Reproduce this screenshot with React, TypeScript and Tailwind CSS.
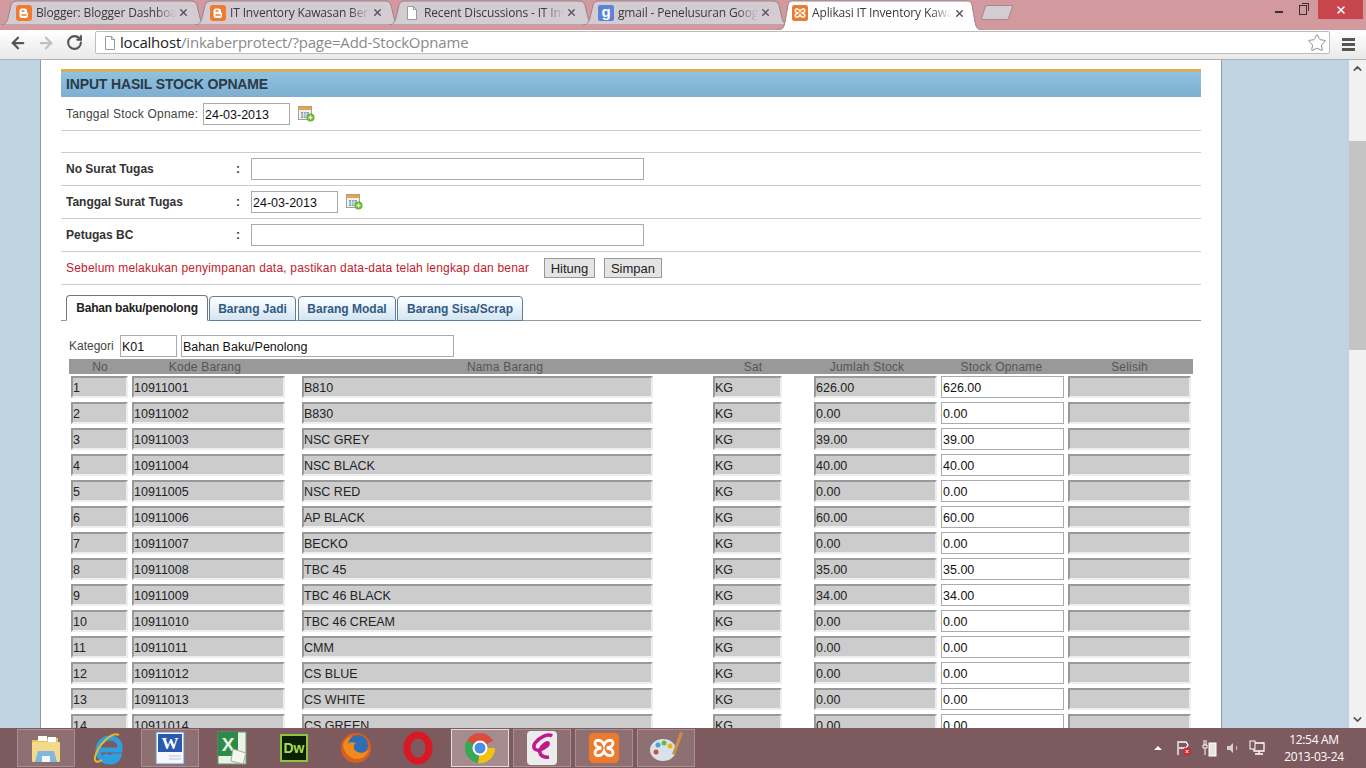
import React from "react";
import { ArrowLeft, ArrowRight, RotateCw, Star, X, ChevronUp, ChevronDown } from "lucide-react";

const items = [
  ["10911001", "B810", "626.00", "626.00"],
  ["10911002", "B830", "0.00", "0.00"],
  ["10911003", "NSC GREY", "39.00", "39.00"],
  ["10911004", "NSC BLACK", "40.00", "40.00"],
  ["10911005", "NSC RED", "0.00", "0.00"],
  ["10911006", "AP BLACK", "60.00", "60.00"],
  ["10911007", "BECKO", "0.00", "0.00"],
  ["10911008", "TBC 45", "35.00", "35.00"],
  ["10911009", "TBC 46 BLACK", "34.00", "34.00"],
  ["10911010", "TBC 46 CREAM", "0.00", "0.00"],
  ["10911011", "CMM", "0.00", "0.00"],
  ["10911012", "CS BLUE", "0.00", "0.00"],
  ["10911013", "CS WHITE", "0.00", "0.00"],
  ["10911014", "CS GREEN", "0.00", "0.00"],
];

const BloggerIcon = () => (
  <svg width="16" height="16" viewBox="0 0 16 16" className="shrink-0">
    <rect width="16" height="16" rx="3" fill="#f07a30" />
    <path d="M6 3.5h2.5A2.5 2.5 0 0 1 11 6v1a1 1 0 0 0 1 1v2.500A2.500 2.500 0 0 1 9.500 13h-3.500A2.500 2.500 0 0 1 3.500 10.500V6A2.500 2.500 0 0 1 6 3.500z" fill="#fff" />
    <path d="M6 6h2M6 10h4" stroke="#f07a30" strokeWidth="1.400" strokeLinecap="round" />
  </svg>
);

const PageIcon = () => (
  <svg width="16" height="16" viewBox="0 0 16 16" className="shrink-0">
    <path d="M3.500 1.500h6l3 3v10h-9z" fill="#fff" stroke="#9a9a9a" />
    <path d="M9.500 1.500v3h3" fill="none" stroke="#9a9a9a" />
  </svg>
);

const GoogleIcon = () => (
  <span className="flex h-4 w-4 shrink-0 items-center justify-center rounded-[2px] bg-[#5b84d8] pb-[3px] font-['Liberation_Sans',sans-serif] text-[15px] font-bold leading-none text-white">
    g
  </span>
);

const XamppIcon = ({ size = 16 }: { size?: number }) => (
  <svg width={size} height={size} viewBox="0 0 16 16" className="shrink-0">
    <rect width="16" height="16" rx="2.500" fill="#ee7a2d" />
    <path
      d="M8 6.200C7 3.500 3.400 3 3.200 5.400 3.100 7 5 7.700 6.500 8 5 8.300 3.100 9 3.200 10.600 3.400 13 7 12.500 8 9.800 9 12.500 12.600 13 12.800 10.600 12.900 9 11 8.300 9.500 8 11 7.700 12.900 7 12.800 5.400 12.600 3 9 3.500 8 6.200z"
      fill="none"
      stroke="#fff"
      strokeWidth="1.500"
    />
  </svg>
);

const CalendarIcon = () => (
  <svg width="17" height="16" viewBox="0 0 17 16" className="shrink-0">
    <rect x="0.500" y="0.500" width="13" height="13" fill="#f4f4ee" stroke="#a5a08c" />
    <rect x="1" y="1" width="12" height="3" fill="#e9a14b" />
    <rect x="3" y="6" width="8" height="6" fill="#7f9bb8" />
    <path d="M5.500 6v6M8 6v6M3 8h8M3 10h8" stroke="#e6edf2" strokeWidth="0.800" />
    <circle cx="12.500" cy="11.500" r="4" fill="#69b52c" />
    <path d="M10.500 11.500h4M12.500 9.500v4" stroke="#fff" strokeWidth="1.300" />
  </svg>
);

const ChromeTab = ({
  title,
  icon,
  active,
}: {
  title: string;
  icon: React.ReactNode;
  active?: boolean;
}) => (
  <div className={`relative -mr-[12px] flex w-[206px] items-center pl-[15px] ${active ? "h-[30px]" : "h-[25px]"}`}>
    <svg width="206" height={active ? 30 : 25} className="absolute left-0 top-0">
      <path
        d={
          active
            ? "M0 30C6 30 7 27 8 22L11 5C12 2 13 1 17 1H189C193 1 194 2 195 5L198 22C199 27 200 30 206 30"
            : "M0 25C4 25 6 22 7 18L10 5C11 2 13 1 16 1H190C193 1 195 2 196 5L199 18C200 22 202 25 206 25Z"
        }
        fill={active ? "#ffffff" : "#d3ccd3"}
        stroke="#9c8488"
      />
    </svg>
    <div className={`relative flex items-center ${active ? "-mt-[4px]" : ""}`}>
      {icon}
      <span className="ml-[4px] w-[140px] overflow-hidden whitespace-nowrap text-[12px] leading-[14px] tracking-[-0.15px] text-[#3a3a3a] [mask-image:linear-gradient(to_right,#000_85%,transparent)]">
        {title}
      </span>
      <X size={11} strokeWidth={3} className="ml-[2px] text-[#55505a]" />
    </div>
  </div>
);

const BrowserChrome = () => (
  <div className="shrink-0 font-['Open_Sans',sans-serif]">
    <div className="relative h-[30px] bg-[#d2999e] pl-[1px]">
      <div className="flex items-start">
        <ChromeTab title="Blogger: Blogger Dashboard" icon={<BloggerIcon />} />
        <ChromeTab title="IT Inventory Kawasan Berikat" icon={<BloggerIcon />} />
        <ChromeTab title="Recent Discussions - IT Inventory" icon={<PageIcon />} />
        <ChromeTab title="gmail - Penelusuran Google" icon={<GoogleIcon />} />
        <ChromeTab title="Aplikasi IT Inventory Kawasan" icon={<XamppIcon />} active />
        <div className="ml-[12px] mt-[5px] h-[15px] w-[28px] -skew-x-[18deg] rounded-[2px] border border-[#a08a90] bg-[#d3ccd3]" />
      </div>
      <div className="absolute right-[3px] top-0 flex items-start">
        <div className="mr-[16px] mt-[11px] h-[2px] w-[8px] bg-[#333]" />
        <div className="relative mr-[11px] mt-[5px] h-[10px] w-[8px] border border-[#333]">
          <div className="absolute -right-[3px] -top-[3px] h-[8px] w-[7px] border-r border-t border-[#333]" />
        </div>
        <div className="flex h-[19px] w-[45px] items-center justify-center bg-[#c8474f]">
          <X size={12} strokeWidth={3} className="text-white" />
        </div>
      </div>
    </div>
    <div className="flex h-[30px] items-start border-b border-[#b0b0b0] bg-gradient-to-b from-[#ffffff] to-[#e9e9e9] pl-[9px]">
      <ArrowLeft size={18} strokeWidth={3} className="mt-[4px] text-[#555]" />
      <ArrowRight size={18} strokeWidth={3} className="ml-[10px] mt-[4px] text-[#c0c0c0]" />
      <RotateCw size={17} strokeWidth={3} className="ml-[11px] mt-[4px] text-[#555]" />
      <div className="ml-[12px] mt-[1px] flex h-[23px] w-[1235px] items-center rounded-[2px] border border-[#bdbdbd] bg-white pl-[6px]">
        <PageIcon />
        <span className="ml-[2px] text-[15px] leading-none tracking-[-0.2px] text-[#222]">localhost</span>
        <span className="text-[15px] leading-none tracking-[-0.2px] text-[#8a8a8a]">/inkaberprotect/?page=Add-StockOpname</span>
        <Star size={20} strokeWidth={1} className="ml-auto mr-[2px] text-[#777]" />
      </div>
      <div className="ml-[12px] mt-[8px] flex w-[13px] flex-col gap-[2px]">
        <div className="h-[3px] bg-[#555]" />
        <div className="h-[3px] bg-[#555]" />
        <div className="h-[3px] bg-[#555]" />
      </div>
    </div>
  </div>
);

const TextBox = ({ value = "", className = "" }: { value?: string; className?: string }) => (
  <input
    readOnly
    value={value}
    className={`h-[22px] border border-[#aaaaaa] bg-white px-[1px] pt-[2px] text-[12.5px] text-[#111] outline-none ${className}`}
  />
);

const Disabled = ({ value = "", className = "" }: { value?: string; className?: string }) => (
  <input
    readOnly
    value={value}
    className={`h-[22px] border-2 border-b-[#eeeeee] border-l-[#999999] border-r-[#eeeeee] border-t-[#999999] bg-[#cccccc] px-0 pt-[2px] text-[12.5px] text-[#222] outline-none ${className}`}
  />
);

const FormRow = ({ label, children }: { label: string; children: React.ReactNode }) => (
  <div className="flex h-[33px] items-center border-b border-[#cccccc] pl-[5px]">
    <span className="w-[170px] text-[12px] font-bold text-[#333]">{label}</span>
    <span className="w-[15px] text-[12px] font-bold text-[#333]">:</span>
    {children}
  </div>
);

const InnerTab = ({ label, width, active }: { label: string; width: string; active?: boolean }) => (
  <div
    className={`flex items-center justify-center rounded-t-[4px] border border-[#5f7f98] text-[12px] font-bold ${width} ${
      active
        ? "relative z-10 h-[26px] border-[#777] border-b-white bg-white tracking-[-0.2px] text-[#222]"
        : "h-[25px] bg-gradient-to-b from-white to-[#d3e5f2] text-[#2f5a85]"
    }`}
  >
    {label}
  </div>
);

const FormPanel = () => (
  <div className="mx-[20px] font-['Liberation_Sans',sans-serif]">
    <div className="flex h-[28px] items-center border-t-[3px] border-[#d9ac58] bg-gradient-to-b from-[#8fc1e0] to-[#7eaed0] pl-[5px] text-[14px] font-bold tracking-[-0.15px] text-[#2b3a47]">
      INPUT HASIL STOCK OPNAME
    </div>
    <div className="flex h-[34px] items-center border-b border-[#cccccc] pl-[5px]">
      <span className="w-[137px] whitespace-nowrap text-[12px] tracking-[0.2px] text-[#444]">Tanggal Stock Opname:</span>
      <TextBox value="24-03-2013" className="w-[87px]" />
      <span className="ml-[8px]">
        <CalendarIcon />
      </span>
    </div>
    <div className="h-[22px] border-b border-[#cccccc]" />
    <FormRow label="No Surat Tugas">
      <TextBox className="w-[393px]" />
    </FormRow>
    <FormRow label="Tanggal Surat Tugas">
      <TextBox value="24-03-2013" className="w-[87px]" />
      <span className="ml-[8px]">
        <CalendarIcon />
      </span>
    </FormRow>
    <FormRow label="Petugas BC">
      <TextBox className="w-[393px]" />
    </FormRow>
    <div className="flex h-[33px] items-center border-b border-[#cccccc] pl-[5px]">
      <span className="w-[478px] whitespace-nowrap text-[12px] tracking-[0.19px] text-[#c4202c]">
        Sebelum melakukan penyimpanan data, pastikan data-data telah lengkap dan benar
      </span>
      <button className="h-[20px] w-[51px] border border-[#999] bg-[#e4e4e4] text-[13px] text-[#222]">Hitung</button>
      <button className="ml-[9px] h-[20px] w-[58px] border border-[#999] bg-[#e4e4e4] text-[13px] text-[#222]">Simpan</button>
    </div>
    <div className="mt-[10px] flex items-end gap-[1px] border-b border-[#999] pl-[5px] -mb-[1px]">
      <div className="-mb-[1px] flex items-end gap-[1px]">
        <InnerTab label="Bahan baku/penolong" width="w-[142px]" active />
        <InnerTab label="Barang Jadi" width="w-[87px]" />
        <div className="ml-[1px]">
          <InnerTab label="Barang Modal" width="w-[98px]" />
        </div>
        <InnerTab label="Barang Sisa/Scrap" width="w-[126px]" />
      </div>
    </div>
    <div className="mt-[15px] pl-[8px]">
      <div className="flex items-center">
        <span className="w-[51px] text-[12px] text-[#444]">Kategori</span>
        <TextBox value="K01" className="w-[57px]" />
        <TextBox value="Bahan Baku/Penolong" className="ml-[4px] w-[273px]" />
      </div>
      <div className="mt-[2px] flex h-[15px] w-[1124px] items-center bg-[#999999] text-center text-[12px] leading-none tracking-[0.2px] text-[#555]">
        <span className="w-[62px]">No</span>
        <span className="w-[148px]">Kode Barang</span>
        <span className="ml-[22px] w-[408px]">Nama Barang</span>
        <span className="w-[88px]">Sat</span>
        <span className="w-[140px]">Jumlah Stock</span>
        <span className="w-[129px]">Stock Opname</span>
        <span className="w-[127px]">Selisih</span>
      </div>
      <div className="mt-[2px] flex flex-col gap-[4px] pl-[2px]">
        {items.map((row, i) => (
          <div key={row[0]} className="flex">
            <Disabled value={String(i + 1)} className="w-[57px]" />
            <Disabled value={row[0]} className="ml-[4px] w-[153px]" />
            <Disabled value={row[1]} className="ml-[17px] w-[351px]" />
            <Disabled value="KG" className="ml-[60px] w-[69px]" />
            <Disabled value={row[2]} className="ml-[32px] w-[123px]" />
            <TextBox value={row[3]} className="ml-[4px] w-[123px]" />
            <Disabled className="ml-[4px] w-[123px]" />
          </div>
        ))}
      </div>
    </div>
  </div>
);

const Scrollbar = () => (
  <div className="flex w-[17px] shrink-0 flex-col items-center bg-[#f1f1f1]">
    <ChevronUp size={13} strokeWidth={3} className="mt-[2px] text-[#555]" />
    <div className="mt-[66px] h-[209px] w-full bg-[#c4c4c4]" />
    <ChevronDown size={13} strokeWidth={3} className="mb-[2px] mt-auto text-[#555]" />
  </div>
);

const Folder = () => (
  <svg width="32" height="32" viewBox="0 0 32 32">
    <path d="M2 8h10l2-2h14v8H2z" fill="#e9c25c" />
    <rect x="8" y="4" width="9" height="5" fill="#fff" />
    <rect x="18" y="5" width="8" height="5" fill="#fff" />
    <rect x="2" y="10" width="28" height="20" rx="1" fill="#f3d98b" />
    <path d="M8 19h16l3 11H5z" fill="#7fb8dd" />
    <path d="M12 24h8v6h-8z" fill="#f3f8fb" />
  </svg>
);

const IE = () => (
  <svg width="32" height="34" viewBox="0 0 32 34">
    <path d="M8 19h20c1-8-4-12-10-12S6 12 6 19s5 12 12 12c4 0 8-2 9-6h-6c-2 2-7 2-8-2" fill="none" stroke="#2f9fe0" strokeWidth="5" />
    <path d="M27 4C20 0 6 14 3 26c-1 5 2 6 7 3" fill="none" stroke="#e8b92c" strokeWidth="2" />
  </svg>
);

const Word = () => (
  <svg width="30" height="34" viewBox="0 0 30 34">
    <rect x="1" y="1" width="28" height="32" fill="#f6f8fb" stroke="#6d8bb8" />
    <path d="M3 3h24v18H3z" fill="#2a5ab0" />
    <text x="15" y="18" textAnchor="middle" fontSize="17" fontWeight="700" fontFamily="Liberation Serif, serif" fill="#fff">W</text>
    <path d="M14 25h12M14 28h12" stroke="#b8c4d4" />
  </svg>
);

const Excel = () => (
  <svg width="30" height="34" viewBox="0 0 30 34">
    <rect x="1" y="1" width="28" height="32" fill="#e8f2e6" stroke="#6b9a70" />
    <path d="M1 1h20v24H1z" fill="#2f8a4a" />
    <text x="11" y="20" textAnchor="middle" fontSize="19" fontWeight="700" fontFamily="Liberation Sans, sans-serif" fill="#e8f4e4">X</text>
    <path d="M16 18l13 4-3 11-12-3z" fill="#f4f6f0" stroke="#9ab29c" />
  </svg>
);

const Dw = () => (
  <span className="flex h-[28px] w-[28px] items-center justify-center border-2 border-[#8cc63f] bg-[#0d1f05] font-['Liberation_Sans',sans-serif] text-[14px] font-bold text-[#a6de4c]">
    Dw
  </span>
);

const Firefox = () => (
  <svg width="32" height="32" viewBox="0 0 32 32">
    <circle cx="16" cy="16" r="15" fill="#d9601c" />
    <circle cx="18" cy="13" r="10" fill="#2f6eb0" />
    <path d="M3 14c2 8 8 14 16 13 5-1 9-5 10-10-3 4-9 5-13 2-3-2-3-6 0-8-4-1-7-1-8 1 0-3 2-6 4-8C8 5 3 9 3 14z" fill="#ef8a1f" />
  </svg>
);

const Opera = () => (
  <svg width="30" height="34" viewBox="0 0 30 34">
    <ellipse cx="15" cy="17" rx="11" ry="13" fill="none" stroke="#d81822" strokeWidth="7" />
  </svg>
);

const ChromeLogo = () => (
  <svg width="32" height="32" viewBox="0 0 32 32">
    <path d="M16 16L3 8.500A15 15 0 0 1 29 8.500z" fill="#dd4b39" />
    <path d="M16 16h15A15 15 0 0 1 14 31z" fill="#f4c20d" />
    <path d="M16 16L14 31A15 15 0 0 1 3 8.500z" fill="#3aa757" />
    <circle cx="16" cy="16" r="7.500" fill="#fff" />
    <circle cx="16" cy="16" r="5.500" fill="#4a8fe0" />
  </svg>
);

const Emacs = () => (
  <svg width="30" height="34" viewBox="0 0 30 34">
    <rect width="30" height="34" rx="4" fill="#ececec" />
    <path d="M25 5c-4-3-12 1-17 7-3 5 0 8 5 7 5-2 9-5 8-7-1-1-7 3-8 7-1 5 3 8 9 7" fill="none" stroke="#c2188f" strokeWidth="3.500" />
  </svg>
);

const Paint = () => (
  <svg width="36" height="36" viewBox="0 0 36 36">
    <ellipse cx="15" cy="20" rx="13" ry="11" fill="#d8e2ea" />
    <circle cx="10" cy="15" r="2.500" fill="#3fa7dc" />
    <circle cx="16" cy="13" r="2.500" fill="#66bb44" />
    <circle cx="22" cy="16" r="2.500" fill="#e2b52c" />
    <circle cx="8" cy="22" r="2.500" fill="#d8483c" />
    <path d="M32 2l3 1-8 22-3-1z" fill="#c98f42" />
  </svg>
);

const TaskButton = ({
  children,
  state,
}: {
  children?: React.ReactNode;
  state?: "open" | "active";
}) => (
  <div
    className={`flex h-[38px] w-[58px] items-center justify-center ${
      state === "open" ? "border border-[#a68f91] bg-[#8f7072]" : state === "active" ? "border border-[#e4dcdc] bg-[#a58c8e]" : ""
    }`}
  >
    {children}
  </div>
);

const Taskbar = () => (
  <div className="flex h-[40px] shrink-0 items-center bg-[#7d5a5e] pl-[17px] font-['Open_Sans',sans-serif]">
    <div className="flex gap-[4px]">
      <TaskButton state="open"><Folder /></TaskButton>
      <TaskButton><IE /></TaskButton>
      <TaskButton state="open"><Word /></TaskButton>
      <TaskButton><Excel /></TaskButton>
      <TaskButton><Dw /></TaskButton>
      <TaskButton><Firefox /></TaskButton>
      <TaskButton><Opera /></TaskButton>
      <TaskButton state="active"><ChromeLogo /></TaskButton>
      <TaskButton state="open"><Emacs /></TaskButton>
      <TaskButton state="open"><XamppIcon size={30} /></TaskButton>
      <TaskButton state="open"><Paint /></TaskButton>
    </div>
    <div className="ml-auto flex items-center text-white">
      <div className="h-0 w-0 border-x-[4px] border-b-[4px] border-x-transparent border-b-white" />
      <svg width="16" height="16" viewBox="0 0 16 16" className="ml-[14px]">
        <path d="M2 1v14M3 2h7l2 3-2 3H3" fill="none" stroke="#fff" strokeWidth="1.300" />
        <circle cx="11" cy="11.500" r="4" fill="#cc2a36" />
        <path d="M9.500 10l3 3M12.500 10l-3 3" stroke="#fff" />
      </svg>
      <svg width="16" height="18" viewBox="0 0 16 18" className="ml-[9px]">
        <path d="M3 1v5M5 1v5M2 6h4v3H2zM4 9v7" fill="none" stroke="#fff" />
        <rect x="8" y="4" width="7" height="13" fill="#e8e4e4" stroke="#fff" />
      </svg>
      <svg width="14" height="14" viewBox="0 0 14 14" className="ml-[9px]">
        <path d="M1 5h3l3-3v10L4 9H1z" fill="#d8d0d0" />
        <path d="M10 5c1 1 1 3 0 4" fill="none" stroke="#d8d0d0" />
      </svg>
      <svg width="16" height="16" viewBox="0 0 16 16" className="ml-[9px]">
        <path d="M5 3h10v8H5zM10 11v3M6 14h8" fill="none" stroke="#fff" strokeWidth="1.300" />
        <rect x="1" y="1" width="5" height="8" fill="#7d5a5e" stroke="#fff" />
      </svg>
      <div className="ml-[13px] mr-[16px] flex w-[72px] flex-col items-center text-[12px] leading-[17px] tracking-[-0.3px] text-white">
        <span>12:54 AM</span>
        <span>2013-03-24</span>
      </div>
    </div>
  </div>
);

export default function App() {
  return (
    <div className="flex h-[768px] w-[1366px] flex-col overflow-hidden">
      <BrowserChrome />
      <div className="flex min-h-0 flex-1 bg-[#c0d3e1]">
        <div className="min-h-0 flex-1 overflow-hidden">
          <div className="ml-[40px] h-[800px] w-[1182px] border-x border-[#8c9cab] bg-white pt-[9px]">
            <FormPanel />
          </div>
        </div>
        <Scrollbar />
      </div>
      <Taskbar />
    </div>
  );
}
